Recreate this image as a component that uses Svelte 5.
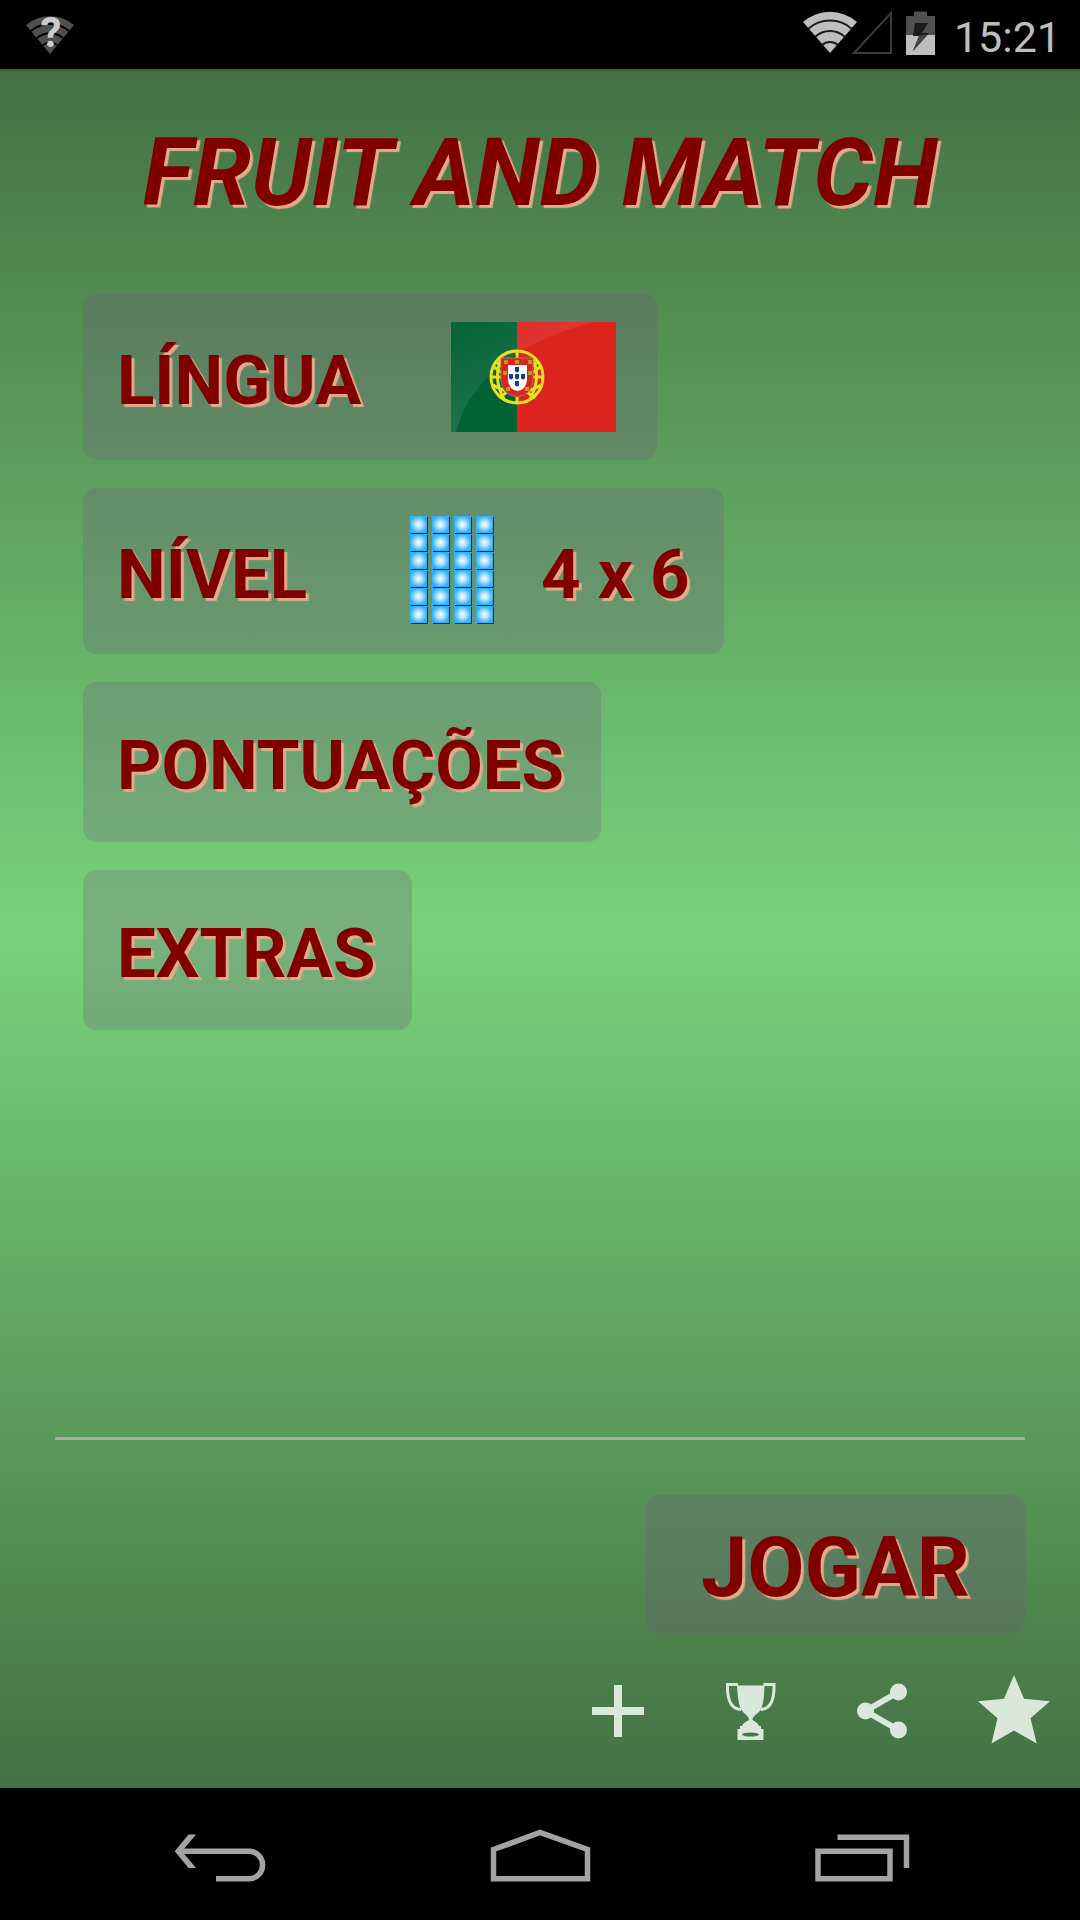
<script lang="ts">
  let {
    time = '15:21',
    columns = 4,
    rows = 6
  }: {
    time?: string;
    columns?: number;
    rows?: number;
  } = $props();

  const tiles = $derived(
    Array.from({ length: columns * rows }, (_, i) => ({
      x: (i % columns) * 22,
      y: Math.floor(i / columns) * 18
    }))
  );

  // small blue shields and gold castles of the Portuguese arms
  const quinas = [[66, 48], [60, 55], [66, 55], [72, 55], [66, 62]];
  const castles = [[55, 40], [66, 40], [79, 40], [54, 51], [79, 51], [57, 67], [76, 67]];
</script>

<div class="screen">
  <header class="status">
    <svg class="wifi-unknown" viewBox="0 0 48 69" aria-hidden="true">
      <path d="M24 54L0 25A37.6 37.6 0 0 1 48 25Z" fill="#505050" />
      <g fill="none" stroke="#000" stroke-width="2">
        <path d="M5 31A29 29 0 0 1 43 31" />
        <path d="M11 38A20 20 0 0 1 37 38" />
        <path d="M17 45A11 11 0 0 1 31 45" />
      </g>
      <text x="25" y="47" text-anchor="middle">?</text>
    </svg>
    <div class="status-right">
      <svg class="network" viewBox="0 0 90 69" aria-hidden="true">
        <path d="M27 53L0 22A41 41 0 0 1 54 22Z" fill="#bebebe" />
        <g fill="none" stroke="#1c1c1c" stroke-width="2">
          <path d="M5 29A33 33 0 0 1 49 29" />
          <path d="M12 37A22 22 0 0 1 42 37" />
          <path d="M19 45A12 12 0 0 1 35 45" />
        </g>
        <path d="M51 53H88V13Z" fill="none" stroke="#3c3c3c" stroke-width="2" />
      </svg>
      <svg class="battery" viewBox="0 0 29 69" aria-hidden="true">
        <path d="M0 16H8V11.5H21V16H29V35H0Z" fill="#505050" />
        <path d="M0 35H29V55H0Z" fill="#bebebe" />
        <path d="M9 23H22L16 33H23L7 51L13 36H7Z" fill="#1c1c1c" />
        <path d="M15.5 35H21.5L7 51L13 36Z" fill="#444" />
      </svg>
      <time>{time}</time>
    </div>
  </header>

  <main>
    <h1>FRUIT AND MATCH</h1>

    <nav class="menu" aria-label="Menu">
      <button class="item tall language">
        <span>LÍNGUA</span>
        <svg class="flag" viewBox="0 0 165 110" aria-hidden="true">
          <defs>
            <linearGradient id="glare" x1="0" y1="0" x2="0.4" y2="0.6">
              <stop offset="0.2" stop-color="#fff" stop-opacity="0.03" />
              <stop offset="1" stop-color="#fff" stop-opacity="0.1" />
            </linearGradient>
          </defs>
          <rect width="66" height="110" fill="#006233" />
          <rect x="66" width="99" height="110" fill="#dc241f" />
          <path d="M0 0H142Q25 32 5 110H0Z" fill="url(#glare)" />
          <g fill="none" stroke="#e8e01c" stroke-width="3">
            <circle cx="66" cy="55" r="26" />
            <path d="M66 29V81M40 55H92" />
            <path d="M45 40Q66 56 87 40M42 63Q66 78 90 63" />
            <path d="M51 35Q41 56 53 77M81 35Q91 56 79 77M43 45L84 76M89 45L48 76" />
          </g>
          <path d="M50 36H82V58Q81 73 66 75Q51 73 50 58Z" fill="#dc241f" stroke="#a9716c" />
          {#each castles as [x, y]}
            <rect x={x - 2} y={y - 2} width="4" height="4" fill="#b39a1c" />
          {/each}
          <path d="M57 43H76V58Q75 68 66.5 69Q58 68 57 58Z" fill="#fff" />
          {#each quinas as [x, y]}
            <path d="M{x - 2} {y - 3}h4v4q-2 3-4 0z" fill="#153a8f" />
          {/each}
        </svg>
      </button>

      <button class="item tall level">
        <span>NÍVEL</span>
        <svg class="board" viewBox="0 0 84 110" aria-hidden="true">
          <defs>
            <radialGradient id="tile">
              <stop offset="0" stop-color="#f4fbff" />
              <stop offset="0.35" stop-color="#c4e8ff" />
              <stop offset="1" stop-color="#30b2f8" />
            </radialGradient>
          </defs>
          {#each tiles as tile}
            <rect x={tile.x + 1} y={tile.y + 1} width="17" height="17" fill="#0b2a38" />
            <rect x={tile.x} y={tile.y} width="17" height="17" fill="url(#tile)" />
          {/each}
        </svg>
        <span>{columns} x {rows}</span>
      </button>

      <button class="item">PONTUAÇÕES</button>
      <button class="item">EXTRAS</button>
    </nav>

    <hr />

    <button class="play">JOGAR</button>

    <div class="actions">
      <button aria-label="Mais">
        <svg viewBox="0 0 96 96"><path d="M44 22h8v22h22v8H52v22h-8V52H22v-8h22z" /></svg>
      </button>
      <button aria-label="Troféus">
        <svg viewBox="0 0 96 96">
          <path d="M35 22.5H62.5C62 38 61 45 56 50Q50 54 50.5 57Q56 60 57 63H59V66H61.5V77H35.5V66H38V63H40Q41 60 47 57Q47 54 42 50C37 45 36 38 35 22.500Z" />
          <ellipse cx="48.5" cy="71.5" rx="8.5" ry="2" class="hole" />
          <path d="M36 21.500H25.500C25 37 29 46 39 46.500M61.500 21.500H72C72.500 37 68.500 46 58.500 46.500" class="line thin" />
        </svg>
      </button>
      <button aria-label="Partilhar">
        <svg viewBox="0 0 96 96">
          <path d="M64.5 29L31.5 48L64.5 67" class="line" />
          <circle cx="64.5" cy="29" r="8.5" />
          <circle cx="31.5" cy="48" r="8.5" />
          <circle cx="64.5" cy="67" r="8.5" />
        </svg>
      </button>
      <button aria-label="Avaliar">
        <svg viewBox="0 0 96 96">
          <path d="M48 12L58 35.7L84 38.3L64.5 55.3L70.7 80.5L48 67.5L25.5 80.5L31.5 55.3L12 38.3L38 35.7Z" />
        </svg>
      </button>
    </div>
  </main>

  <footer class="navbar">
    <button aria-label="Voltar">
      <svg viewBox="0 0 120 96">
        <path d="M20 45.3H90A13.8 13.8 0 0 1 90 72.8H56" />
        <path d="M14.7 45.3L28.5 28.5H36L22 45.3L36 62H28.5Z" class="solid" />
      </svg>
    </button>
    <button aria-label="Início">
      <svg viewBox="0 0 120 96">
        <path d="M13.5 43.5L60 26.5L107.5 43.5V72.8H13.5Z" />
      </svg>
    </button>
    <button aria-label="Recentes">
      <svg viewBox="0 0 120 96">
        <path d="M18 45.2H90V72.8H18ZM37.5 31.2H106.5V62" />
      </svg>
    </button>
  </footer>
</div>

<style>
  :global(body) {
    margin: 0;
    background: #000;
  }

  .screen {
    display: flex;
    flex-direction: column;
    min-height: 100vh;
    font-family: Roboto, 'Liberation Sans', sans-serif;
  }

  button {
    margin: 0;
    padding: 0;
    border: none;
    background: none;
    font-family: inherit;
    cursor: pointer;
  }

  svg {
    display: block;
    flex: none;
  }

  .status {
    display: flex;
    justify-content: space-between;
    height: 69px;
    padding: 0 19px 0 26px;
    background: #000;
  }

  .status-right {
    display: flex;
  }

  .wifi-unknown {
    width: 48px;
  }

  .wifi-unknown text {
    font-size: 42px;
    font-weight: 700;
    fill: #ccc;
  }

  .network {
    width: 90px;
  }

  .battery {
    width: 29px;
    margin-left: 13px;
  }

  time {
    margin-left: 19px;
    font-size: 43px;
    line-height: 74px;
    color: #bebebe;
  }

  main {
    flex: 1;
    display: flex;
    flex-direction: column;
    background:
      linear-gradient(rgba(60, 60, 60, 0.5), transparent 4px),
      linear-gradient(#447144, #78d27a 50%, #447144);
  }

  h1,
  .item,
  .play {
    color: #800000;
    font-weight: 700;
    text-shadow: 3px 3px 1px #e2ab8a;
  }

  h1 {
    margin: 0;
    padding-top: 48px;
    font-size: 94px;
    line-height: 112px;
    font-style: italic;
    text-align: center;
  }

  .menu {
    flex: 1;
    display: flex;
    flex-direction: column;
    align-items: flex-start;
    gap: 28px;
    padding: 65px 55px 28px 83px;
  }

  .item,
  .play {
    border-radius: 14px;
    background: rgba(116, 84, 132, 0.25);
  }

  .item {
    display: flex;
    align-items: center;
    height: 160px;
    padding: 8px 37px 0 34px;
    font-size: 69px;
    line-height: 82px;
  }

  .item.tall {
    height: 166px;
    padding-top: 0;
  }

  .item span {
    padding-top: 8px;
  }

  .item.language {
    padding-right: 41px;
  }

  .flag {
    width: 165px;
    height: 110px;
    margin-left: 90px;
  }

  .board {
    width: 84px;
    height: 110px;
    margin: 0 47px 0 103px;
  }

  .item.level {
    padding-right: 34px;
  }

  hr {
    align-self: stretch;
    height: 3px;
    margin: 0 55px;
    border: none;
    background: #a3b0a4;
  }

  .play {
    align-self: flex-end;
    height: 138px;
    margin: 55px 55px 0;
    padding: 8px 55px 0;
    font-size: 83px;
    line-height: 98px;
  }

  .actions {
    display: flex;
    justify-content: flex-end;
    height: 155px;
  }

  .actions button {
    display: grid;
    place-items: center;
    width: 132px;
  }

  .actions svg {
    width: 96px;
    height: 96px;
    fill: #dae8dc;
  }

  .actions .line {
    fill: none;
    stroke: #dae8dc;
    stroke-width: 6;
  }

  .actions .thin {
    stroke-width: 3;
  }

  .actions .hole {
    fill: #46784a;
  }

  .navbar {
    display: grid;
    grid-template-columns: repeat(3, 1fr);
    height: 132px;
    padding: 0 60px;
    background: #000;
  }

  .navbar button {
    display: grid;
    place-items: center;
  }

  .navbar svg {
    width: 120px;
    height: 96px;
    fill: none;
    stroke: #a3a3a3;
    stroke-width: 5.5;
  }

  .navbar .solid {
    fill: #a3a3a3;
    stroke: none;
  }
</style>
